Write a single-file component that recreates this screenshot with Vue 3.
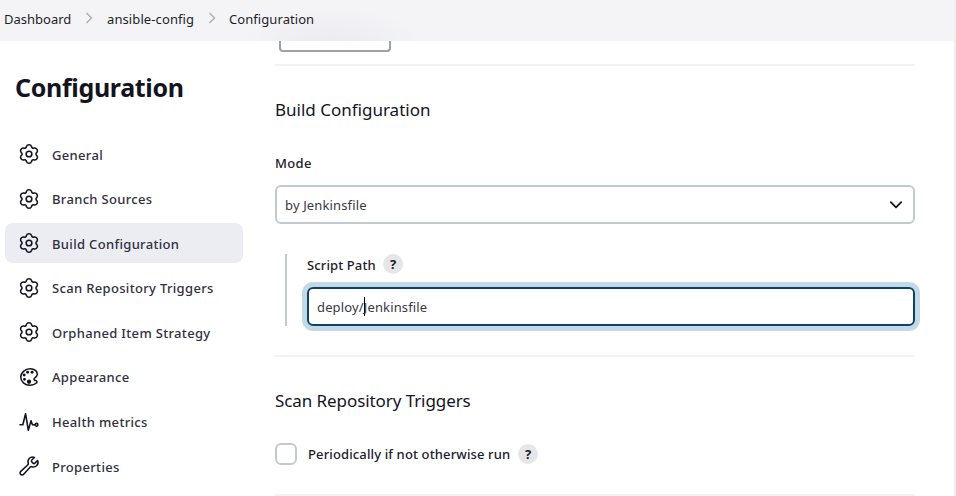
<script setup>
const point = (radius, degrees) => {
  const a = (degrees * Math.PI) / 180
  return `${(12 + radius * Math.cos(a)).toFixed(2)} ${(12 + radius * Math.sin(a)).toFixed(2)}`
}

// Six rounded lobes joined by shallow notches
const gearPath = (() => {
  let d = `M${point(8.7, -109)}`
  for (let i = 0; i < 6; i++) {
    const centre = -90 + i * 60
    d += `A3.05 3.05 0 0 1 ${point(8.7, centre + 19)}`
    d += `A1.9 1.9 0 0 0 ${point(8.7, centre + 41)}`
  }
  return d + 'Z'
})()

const items = [
  { label: 'General', icon: 'gear' },
  { label: 'Branch Sources', icon: 'gear' },
  { label: 'Build Configuration', icon: 'gear', active: true },
  { label: 'Scan Repository Triggers', icon: 'gear' },
  { label: 'Orphaned Item Strategy', icon: 'gear' },
  { label: 'Appearance', icon: 'palette' },
  { label: 'Health metrics', icon: 'pulse' },
  { label: 'Properties', icon: 'wrench' },
]
</script>

<template>
  <div class="page">
    <header class="crumbs">
      <span class="crumb-a">Dashboard</span>
      <svg class="sep" viewBox="0 0 8 12"><path d="M1.5 1l5 5-5 5" /></svg>
      <span class="crumb-b">ansible-config</span>
      <svg class="sep" viewBox="0 0 8 12"><path d="M1.5 1l5 5-5 5" /></svg>
      <span class="crumb-c">Configuration</span>
    </header>
    <div class="body">
      <aside class="side">
        <h1>Configuration</h1>
        <nav>
          <a v-for="item in items" :key="item.label" :class="['item', { active: item.active }]">
            <svg v-if="item.icon === 'gear'" class="icon gear" viewBox="0 0 24 24">
              <path :d="gearPath" />
              <circle cx="12" cy="12" r="3.1" />
            </svg>
            <svg v-else-if="item.icon === 'palette'" class="icon" viewBox="0 0 512 512">
              <path d="M430.11 347.9c-6.6-6.1-16.3-7.6-24.6-9-11.5-1.9-15.9-4-22.6-10-14.3-12.7-14.3-31.1 0-43.8l30.3-26.9c46.4-41 46.4-108.2 0-149.2-34.2-30.1-80.1-45-127.8-45-55.7 0-113.9 20.3-158.8 60.1-83.5 73.8-83.5 194.7 0 268.5 41.5 36.7 97.5 55 152.9 55.4h1.7c55.4 0 110-17.9 148.8-52.4 14.4-12.7 11.99-36.6.1-47.7z" />
              <g class="solid">
                <circle cx="144" cy="208" r="34" />
                <circle cx="152" cy="311" r="34" />
                <circle cx="224" cy="144" r="34" />
                <circle cx="256" cy="367" r="50" />
                <circle cx="328" cy="144" r="34" />
              </g>
            </svg>
            <svg v-else-if="item.icon === 'pulse'" class="icon" viewBox="0 0 512 512">
              <path d="M48 320h64l64-256 64 384 64-224 32 96h64" />
              <circle cx="432" cy="320" r="32" />
            </svg>
            <svg v-else class="icon" viewBox="0 0 512 512">
              <path d="M393.87 190a32.1 32.1 0 01-45.25 0l-26.57-26.57a32.09 32.09 0 010-45.26L382.19 58a1 1 0 00-.3-1.64c-38.82-16.64-89.15-8.16-121.11 23.57-30.58 30.35-32.32 76-21.12 115.84a31.93 31.93 0 01-9.06 32.08L64 380a48.17 48.17 0 1068 68l153.86-167a31.93 31.93 0 0131.6-9.13c39.54 10.59 84.54 8.6 114.72-21.19 32.49-32 39.5-88.56 23.75-120.93a1 1 0 00-1.6-.26z" />
            </svg>
            <span>{{ item.label }}</span>
          </a>
        </nav>
      </aside>
      <main class="main">
        <section class="previous"><div class="button"></div></section>
        <section class="build-section">
          <h2 class="h-build">Build Configuration</h2>
          <div class="label mode"><span>Mode</span></div>
          <div class="select">
            <span>by Jenkinsfile</span>
            <svg viewBox="0 0 14 10"><path d="M1.8 2.2L7 7.3l5.2-5.1" /></svg>
          </div>
          <div class="nested">
            <div class="label"><span class="script">Script Path</span><b class="help">?</b></div>
            <div class="input"><span>deploy/</span><i class="caret"></i><span>Jenkinsfile</span></div>
          </div>
        </section>
        <section class="scan-section">
          <h2 class="h-scan">Scan Repository Triggers</h2>
          <div class="check-row">
            <span class="box"></span>
            <span class="periodic">Periodically if not otherwise run</span>
            <b class="help">?</b>
          </div>
        </section>
      </main>
    </div>
  </div>
</template>

<style>
body { margin: 0; overflow: hidden; background: #fff; }
</style>

<style scoped>
.page {
  box-sizing: border-box;
  width: 956px;
  height: 496px;
  overflow: hidden;
  border-right: 2px solid #f0f0f1;
  color: #14141f;
  font-family: "Noto Sans", "Open Sans", sans-serif;
  font-size: 13px;
  white-space: nowrap;
}
.crumbs {
  display: flex;
  align-items: center;
  box-sizing: border-box;
  height: 41px;
  padding: 0 0 3px 5px;
  background: radial-gradient(ellipse 90px 40px at 332px 47px, #eae9ef, #f4f4f7);
  color: #1e1e2a;
}
.crumb-a { width: 81px; margin-left: -1px; margin-right: 1px; }
.crumb-b { width: 95px; letter-spacing: 0.1px; }
.crumb-c { letter-spacing: 0.07px; }
.sep { width: 8px; height: 12px; margin-right: 13px; margin-bottom: 2px; margin-left: -1px; fill: none; stroke: #a9a8b8; stroke-width: 1.3; }
.crumb-b + .sep { margin-left: 6px; }
.crumb-a + .sep { margin-right: 14px; }
.body { display: flex; height: 455px; }
.side { width: 243px; padding-left: 5px; box-sizing: border-box; }
h1 { margin: 28px 0 27px 10px; height: 36px; line-height: 36px; font-size: 25px; font-weight: 700; letter-spacing: -0.33px; }
nav { display: flex; flex-direction: column; gap: 4.6px; padding-top: 2px; }
.item {
  display: flex;
  align-items: center;
  height: 40px;
  padding-left: 13px;
  border-radius: 8px;
  color: #303040;
  font-weight: 500;
  letter-spacing: 0.33px;
}
.item span { padding-top: 1px; }
.active { background: #ecedf3; }
.icon { width: 22px; height: 22px; margin-right: 12px; fill: none; stroke: #14141f; stroke-width: 36; stroke-linecap: round; stroke-linejoin: round; }
.gear { stroke-width: 1.7; }
.solid { fill: #14141f; stroke: none; }
.main { width: 640px; margin-left: 32px; }
section { box-sizing: border-box; border-bottom: 2px solid #f2f2f8; }
.previous { height: 25px; padding-left: 4px; }
.button { box-sizing: border-box; width: 112px; height: 11px; border: 2px solid #98a3ab; border-top: 0; border-radius: 0 0 4px 4px; }
.build-section { height: 291px; padding-top: 30px; }
h2 { margin: 0; height: 28px; line-height: 28px; font-size: 17px; font-weight: 450; }
.h-build { letter-spacing: 0; }
.h-scan { letter-spacing: -0.08px; }
.label { display: flex; align-items: center; height: 20px; font-weight: 500; color: #20202c; }
.mode { margin-top: 29px; letter-spacing: 0.35px; }
.select, .input { display: flex; align-items: center; box-sizing: border-box; height: 39px; padding: 0 8px; border: 2px solid #bfcbcf; border-radius: 6px; color: #383844; letter-spacing: 0.14px; }
.select { margin-top: 12px; justify-content: space-between; padding-right: 10px; }
.select svg { width: 14px; height: 10px; fill: none; stroke: #14141f; stroke-width: 1.8; stroke-linecap: round; stroke-linejoin: round; }
.nested { height: 72px; margin: 30px 0 0 10px; padding-left: 20px; border-left: 2px solid #bfcbcf; }
.help { display: flex; align-items: center; justify-content: center; width: 20px; height: 20px; border-radius: 50%; background: #e6e6e6; font-size: 13px; font-weight: 700; letter-spacing: 0; }
.script { width: 76px; padding-top: 2px; letter-spacing: 0.12px; }
.input { margin-top: 13px; border-color: #0b4364; box-shadow: 0 0 0 5px #c3d9e8; }
.caret { width: 1px; height: 19px; margin-right: -1px; background: #000; }
.scan-section { height: 139px; padding-top: 30px; }
.check-row { display: flex; align-items: center; margin-top: 28px; height: 22px; font-weight: 500; color: #20202c; }
.box { box-sizing: border-box; width: 22px; height: 22px; margin-right: 11px; border: 2px solid #bfcbcf; border-radius: 6px; }
.periodic { width: 210px; letter-spacing: 0.13px; }
</style>
